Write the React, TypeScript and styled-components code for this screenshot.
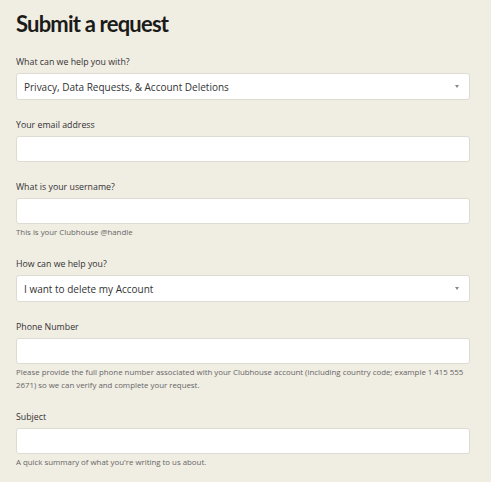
import styled, { createGlobalStyle } from 'styled-components';

const GlobalStyle = createGlobalStyle`
  html, body {
    margin: 0;
    padding: 0;
    background: #f0ede3;
  }
  body {
    font-family: "Open Sans", "Noto Sans", sans-serif;
    color: #2b2b2b;
  }
`;

const Page = styled.div`
  padding: 9px 21px 0 16px;
`;

const Title = styled.h1`
  margin: 0 0 17px;
  font-family: Lato, "Open Sans", sans-serif;
  font-size: 22px;
  font-weight: 700;
  line-height: 30px;
  letter-spacing: -0.8px;
  color: #1b1b19;
`;

const StyledForm = styled.form`
  display: flex;
  flex-direction: column;
  gap: 19px;
`;

const InputGroup = styled.div`
  display: flex;
  flex-direction: column;
`;

const Label = styled.label`
  font-size: 8.8px;
  line-height: 12px;
  color: #333;
  margin-bottom: 5px;
`;

const Input = styled.input`
  box-sizing: border-box;
  height: 26px;
  width: 100%;
  border: 1px solid #dedbd2;
  border-radius: 3px;
  background: #fff;
  padding: 0 7px;
  font: inherit;
  font-size: 10px;
  outline: none;
`;

const SelectBox = styled.div`
  box-sizing: border-box;
  height: 27px;
  display: flex;
  align-items: center;
  justify-content: space-between;
  border: 1px solid #dedbd2;
  border-radius: 3px;
  background: #fff;
  padding: 0 10px 0 7px;
  font-size: 10px;
  color: #333;
`;

const Arrow = styled.span`
  width: 0;
  height: 0;
  border-left: 2.5px solid transparent;
  border-right: 2.5px solid transparent;
  border-top: 3px solid #888;
`;

const Hint = styled.p`
  margin: 2px 0 0;
  font-size: 7.85px;
  line-height: 13px;
  color: #666;
`;

interface IField {
  id: string;
  label: string;
  value?: string;
  select?: boolean;
  hint?: string;
}

const fields: IField[] = [
  {
    id: 'topic',
    label: 'What can we help you with?',
    value: 'Privacy, Data Requests, & Account Deletions',
    select: true,
  },
  { id: 'email', label: 'Your email address' },
  {
    id: 'username',
    label: 'What is your username?',
    hint: 'This is your Clubhouse @handle',
  },
  {
    id: 'help',
    label: 'How can we help you?',
    value: 'I want to delete my Account',
    select: true,
  },
  {
    id: 'phone',
    label: 'Phone Number',
    hint: 'Please provide the full phone number associated with your Clubhouse account (including country code; example 1 415 555 2671) so we can verify and complete your request.',
  },
  {
    id: 'subject',
    label: 'Subject',
    hint: "A quick summary of what you're writing to us about.",
  },
];

export default function App() {
  return (
    <>
      <GlobalStyle />
      <Page>
        <Title>Submit a request</Title>
        <StyledForm>
          {fields.map((f) => (
            <InputGroup key={f.id}>
              <Label htmlFor={f.id}>{f.label}</Label>
              {f.select ? (
                <SelectBox id={f.id}>
                  {f.value}
                  <Arrow />
                </SelectBox>
              ) : (
                <Input id={f.id} type="text" />
              )}
              {f.hint && <Hint>{f.hint}</Hint>}
            </InputGroup>
          ))}
        </StyledForm>
      </Page>
    </>
  );
}
